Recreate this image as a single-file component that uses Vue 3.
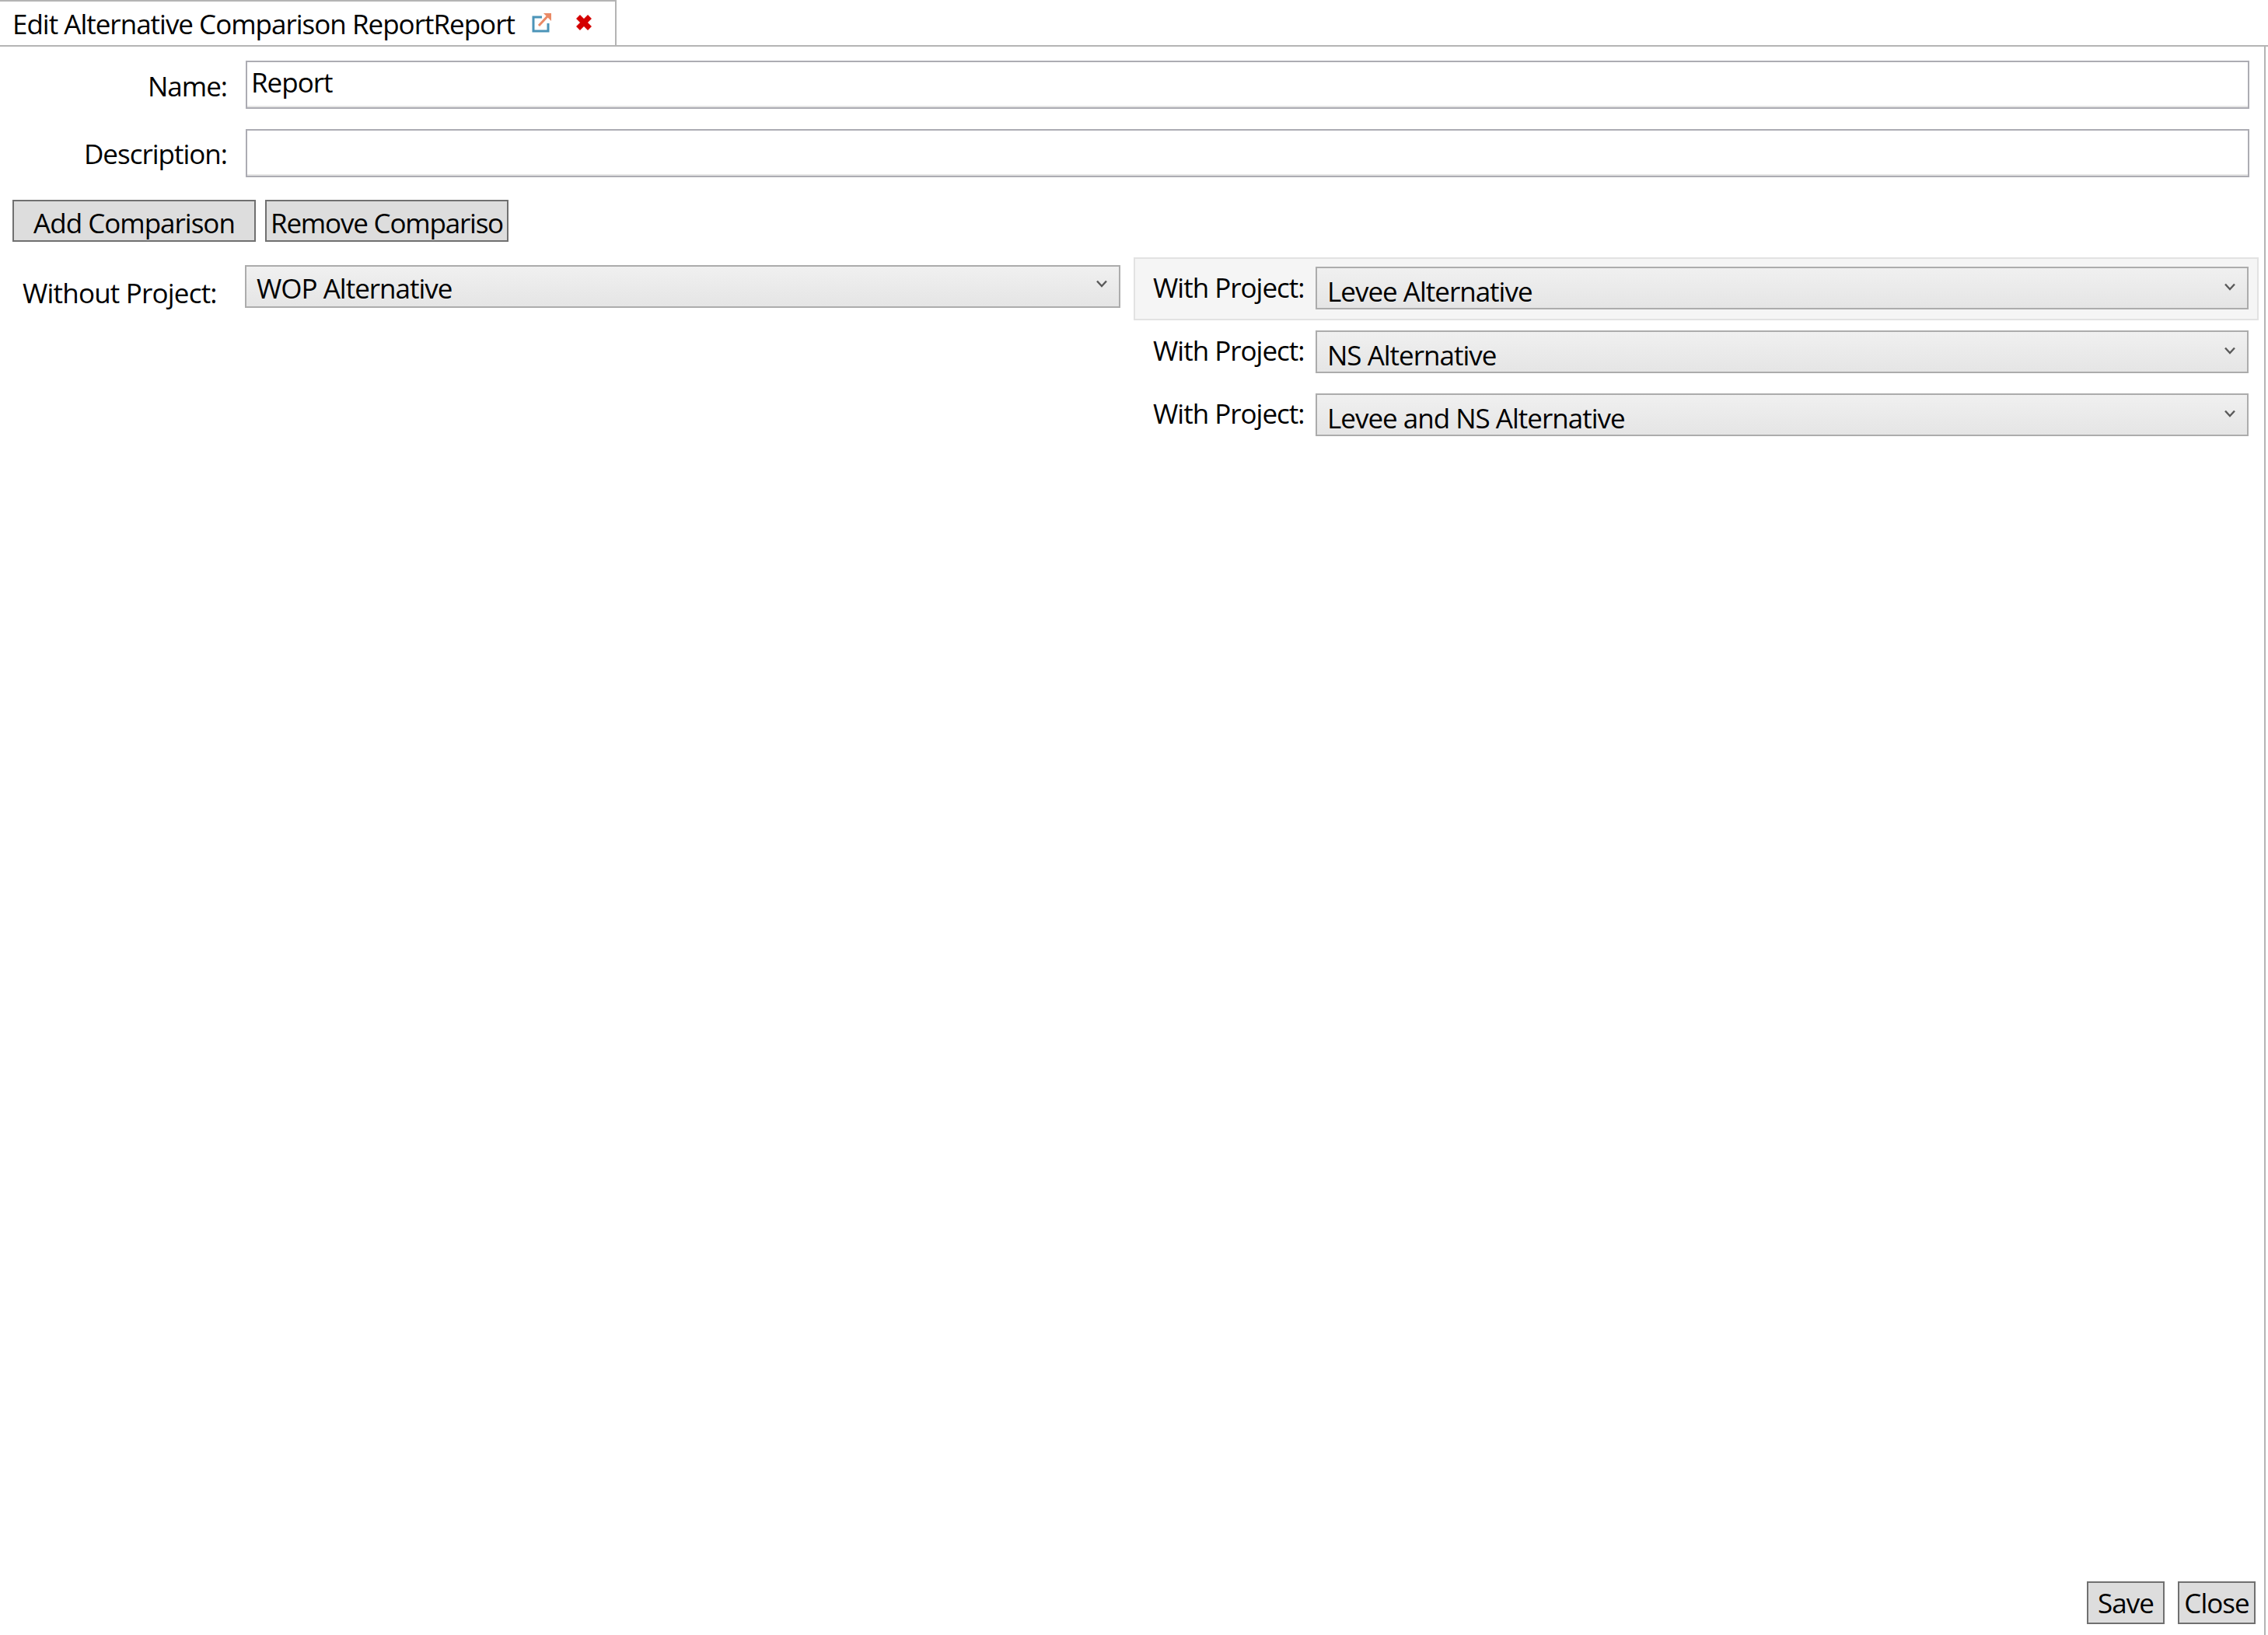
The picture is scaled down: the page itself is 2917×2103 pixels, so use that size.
<script setup>
const withProjects = [
  { name: 'Levee Alternative', active: true },
  { name: 'NS Alternative', active: false },
  { name: 'Levee and NS Alternative', active: false },
]
</script>

<template>
  <div class="page">
    <div class="tabstrip">
      <div class="tab">
        <span class="tab-title">Edit Alternative Comparison ReportReport</span>
        <svg class="pop" width="26" height="27" viewBox="0 0 26 27">
          <path d="M13 7H2v18h19V15" fill="none" stroke="#4b94b8" stroke-width="3"/>
          <path d="M9 18L22 4" fill="none" stroke="#ea8a66" stroke-width="3"/>
          <path d="M15 2h10v10z" fill="#ea8a66"/>
        </svg>
        <svg class="close" width="22" height="22" viewBox="0 0 22 22">
          <path d="M3.5 3.5L18.5 18.5M18.5 3.5L3.5 18.5" fill="none" stroke="#d40000" stroke-width="7"/>
        </svg>
      </div>
    </div>
    <div class="body">
      <div class="field name-row">
        <label class="flabel">Name:</label>
        <div class="input"><span class="input-text">Report</span></div>
      </div>
      <div class="field desc-row">
        <label class="flabel">Description:</label>
        <div class="input"></div>
      </div>
      <div class="actions">
        <button class="btn wide add">Add Comparison</button>
        <button class="btn wide remove">Remove Compariso</button>
      </div>
      <div class="compare">
        <div class="without">
          <label class="wo-label">Without Project:</label>
          <div class="combo wo-combo">
            <span class="combo-text">WOP Alternative</span>
            <svg class="chev" width="16" height="10" viewBox="0 0 16 10"><path d="M2 1.5L8 8L14 1.5" fill="none" stroke="#5a5a5a" stroke-width="2.4"/></svg>
          </div>
        </div>
        <div class="withs">
          <div v-for="w in withProjects" :key="w.name" class="with-row" :class="{ active: w.active }">
            <label class="w-label">With Project:</label>
            <div class="combo w-combo">
              <span class="combo-text w-text">{{ w.name }}</span>
              <svg class="chev w-chev" width="16" height="10" viewBox="0 0 16 10"><path d="M2 1.5L8 8L14 1.5" fill="none" stroke="#5a5a5a" stroke-width="2.4"/></svg>
            </div>
          </div>
        </div>
      </div>
      <div class="footer">
        <button class="btn small">Save</button>
        <button class="btn small">Close</button>
      </div>
    </div>
  </div>
</template>

<style>
html, body { margin: 0; background: #fff; }
</style>

<style scoped>
.page {
  width: 2917px;
  height: 2103px;
  display: flex;
  flex-direction: column;
  font-family: "Open Sans", "Noto Sans", sans-serif;
  font-size: 35px;
  color: #000;
  background: #fff;
  overflow: hidden;
  letter-spacing: -1px;
}
.tabstrip {
  height: 60px;
  box-sizing: border-box;
  flex: none;
  border-bottom: 2px solid #b4b4b4;
}
.tab {
  width: 793px;
  height: 60px;
  box-sizing: border-box;
  border-top: 2px solid #b4b4b4;
  border-right: 2px solid #b4b4b4;
  border-bottom: 2px solid #b4b4b4;
  display: flex;
  align-items: center;
  padding-left: 16px;
}
.tab-title { width: 668px; flex: none; white-space: nowrap; line-height: 46px; margin-top: 2px; }
.pop { flex: none; margin-top: -3px; }
.close { flex: none; margin-left: 30px; margin-top: -3px; }

.body {
  flex: 1;
  box-sizing: border-box;
  width: 2914px;
  border-right: 2px solid #b4b4b4;
  display: flex;
  flex-direction: column;
  min-height: 0;
}
.field { display: flex; align-items: flex-start; }
.name-row { margin-top: 18px; }
.desc-row { margin-top: 26px; }
.flabel {
  width: 292px;
  flex: none;
  text-align: right;
  line-height: 48px;
  margin-top: 9px;
}
.desc-row .flabel { margin-top: 8px; }
.input {
  margin-left: 24px;
  width: 2577px;
  height: 62px;
  box-sizing: border-box;
  border: 2px solid #acacb3;
  background: #fff;
  box-shadow: inset 0 -2px 0 #e6e6e6;
  padding-left: 5px;
  line-height: 48px;
}
.input-text { display: block; margin-top: 2px; }
.actions { display: flex; margin-top: 29px; margin-left: 16px; gap: 12px; }
.btn {
  box-sizing: border-box;
  border: 2px solid #707070;
  background: #dddddd;
  font: inherit;
  letter-spacing: inherit;
  color: #000;
  padding: 0;
  overflow: hidden;
  white-space: nowrap;
  line-height: 50px;
}
.wide { width: 313px; height: 54px; padding-top: 3px; }
.remove { letter-spacing: -1.2px; }
.small { width: 100px; height: 55px; }
.compare { display: flex; align-items: flex-start; margin-top: 20px; }
.without { display: flex; width: 1458px; flex: none; margin-top: 10px; }
.wo-label { width: 315px; flex: none; padding-left: 29px; box-sizing: border-box; line-height: 48px; margin-top: 12px; letter-spacing: -0.8px; }
.combo {
  position: relative;
  box-sizing: border-box;
  height: 55px;
  border: 2px solid #acacac;
  background: linear-gradient(#f0f0f0, #e5e5e5);
}
.wo-combo { width: 1126px; }
.combo-text { position: absolute; left: 13px; top: 4px; line-height: 48px; white-space: nowrap; }
.w-text { top: 6px; }
.chev { position: absolute; right: 14px; top: 17px; }
.w-chev { top: 19px; }
.withs { width: 1447px; flex: none; display: flex; flex-direction: column; }
.with-row {
  display: flex;
  box-sizing: border-box;
  height: 81px;
  padding: 10px 11px 0 23px;
  border: 2px solid transparent;
}
.with-row.active { background: #f5f5f5; border-color: #e2e2e2; }
.w-label { width: 209px; flex: none; line-height: 48px; margin-top: 3px; }
.with-row + .with-row { padding-top: 11px; }
.with-row + .with-row .w-label { margin-top: 2px; }
.w-combo { flex: 1; }
.footer {
  margin-top: auto;
  display: flex;
  justify-content: flex-end;
  gap: 17px;
  padding: 0 11px 14px 0;
}
</style>
